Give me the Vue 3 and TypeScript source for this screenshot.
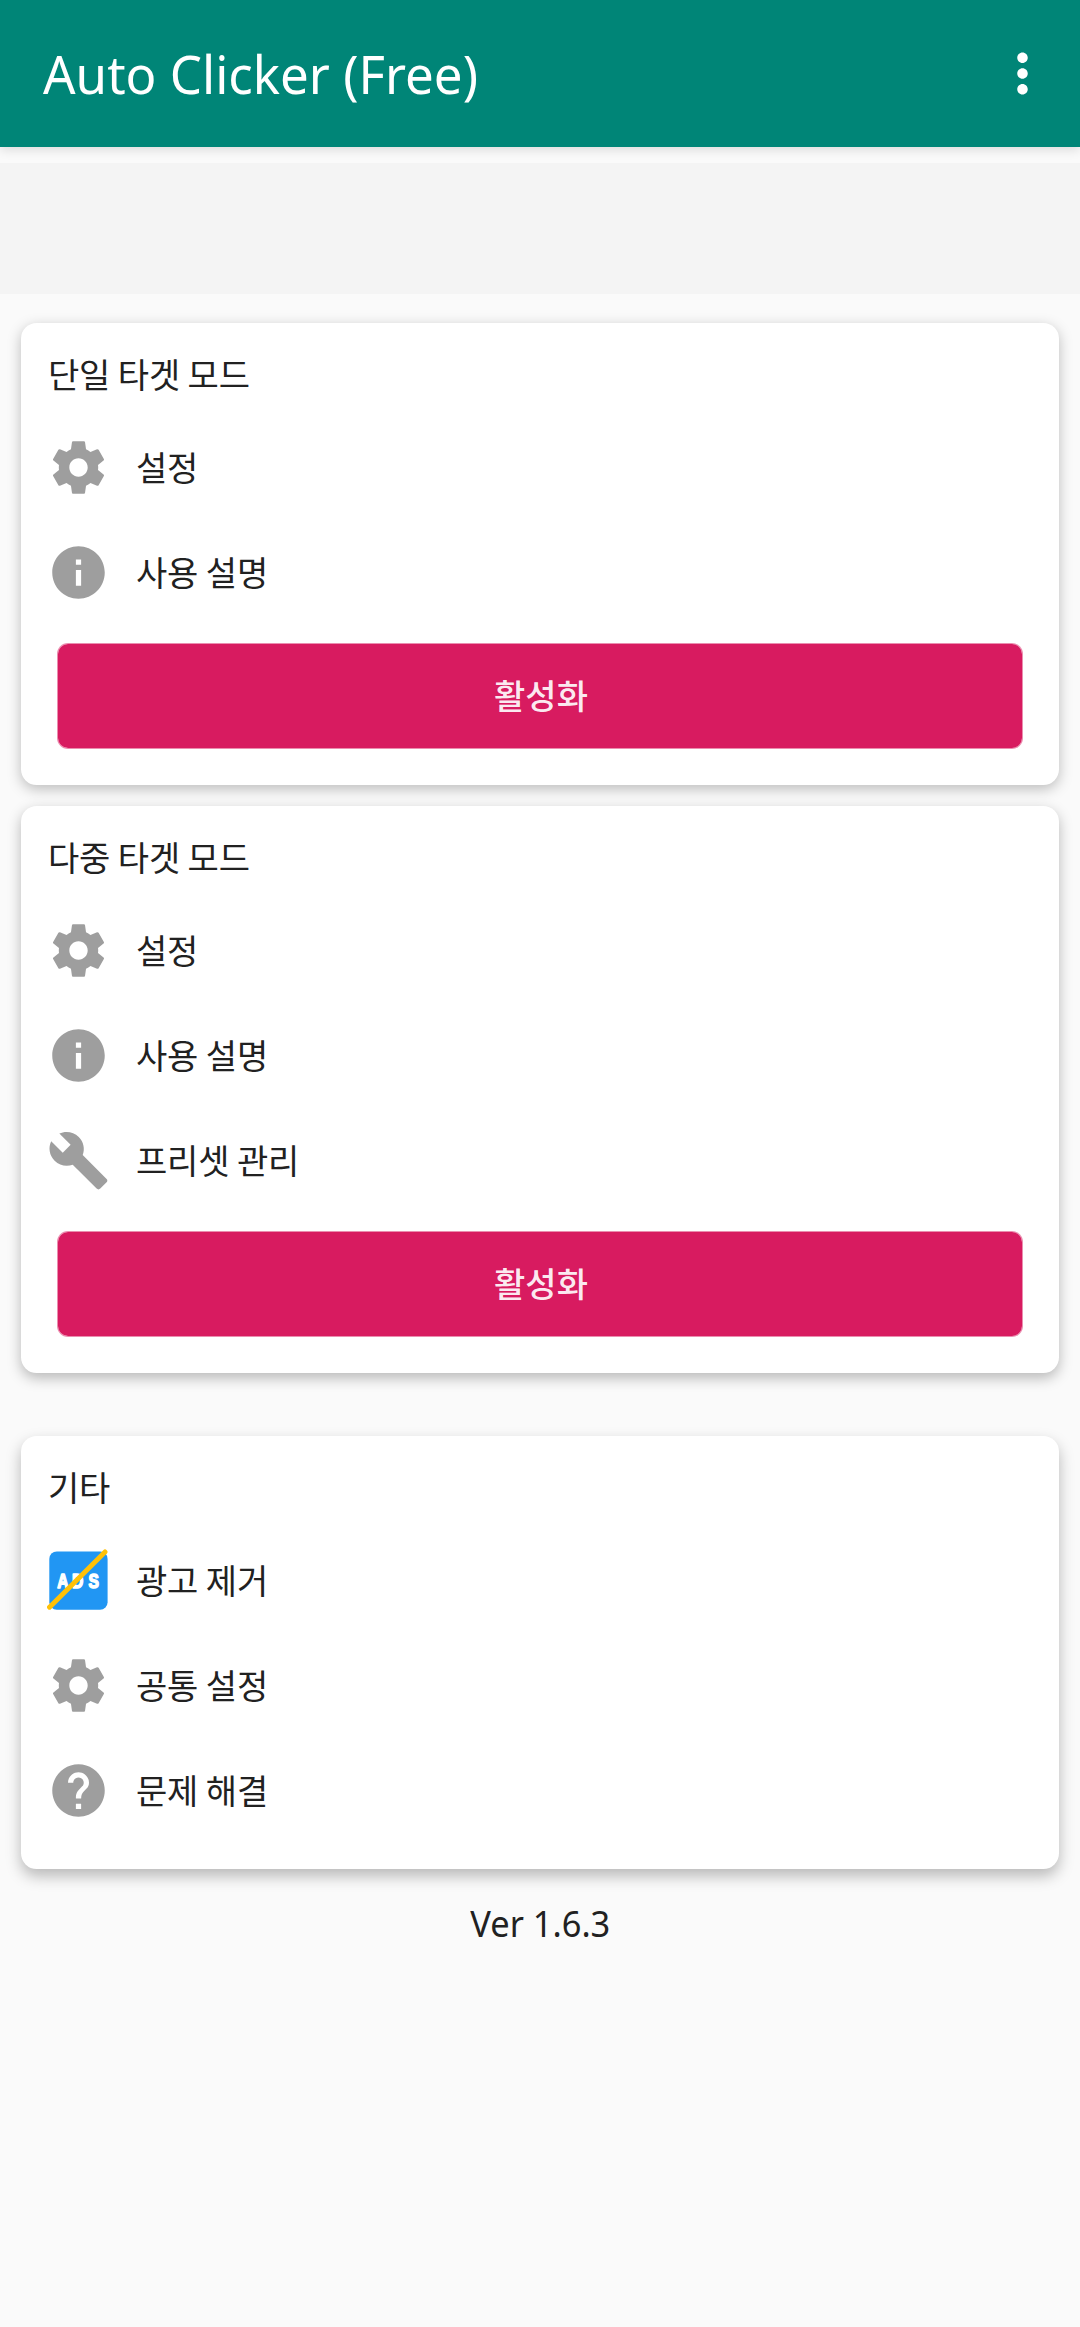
<script setup lang="ts">
type IconName = 'settings' | 'info' | 'build' | 'ads' | 'help'

interface MenuItem {
  icon: IconName
  label: string
}

interface Section {
  id: string
  title: string
  items: MenuItem[]
  action?: string
}

const paths: Record<Exclude<IconName, 'ads'>, string> = {
  settings:
    'M19.43 12.98c.04-.32.07-.64.07-.98s-.03-.66-.07-.98l2.11-1.65c.19-.15.24-.42.12-.64l-2-3.46c-.12-.22-.39-.3-.61-.22l-2.49 1c-.52-.4-1.08-.73-1.69-.98l-.38-2.65C14.46 2.18 14.25 2 14 2h-4c-.25 0-.46.18-.49.42l-.38 2.65c-.61.25-1.17.59-1.69.98l-2.49-1c-.23-.09-.49 0-.61.22l-2 3.46c-.13.22-.07.49.12.64l2.11 1.65c-.04.32-.07.65-.07.98s.03.66.07.98l-2.11 1.65c-.19.15-.24.42-.12.64l2 3.46c.12.22.39.3.61.22l2.49-1c.52.4 1.08.73 1.69.98l.38 2.65c.03.24.24.42.49.42h4c.25 0 .46-.18.49-.42l.38-2.65c.61-.25 1.17-.59 1.69-.98l2.49 1c.23.09.49 0 .61-.22l2-3.46c.12-.22.07-.49-.12-.64l-2.11-1.65zM12 15.5c-1.93 0-3.5-1.57-3.5-3.5s1.57-3.5 3.5-3.5 3.5 1.57 3.5 3.5-1.57 3.5-3.5 3.5z',
  info: 'M12 2C6.48 2 2 6.48 2 12s4.48 10 10 10 10-4.48 10-10S17.52 2 12 2zm1 15h-2v-6h2v6zm0-8h-2V7h2v2z',
  build:
    'M22.7 19l-9.1-9.1c.9-2.3.4-5-1.5-6.9-2-2-5-2.4-7.4-1.3L9 6 6 9 1.6 4.7C.4 7.1.9 10.1 2.9 12.1c1.9 1.9 4.6 2.4 6.9 1.5l9.1 9.1c.4.4 1 .4 1.4 0l2.3-2.3c.5-.4.5-1.1.1-1.4z',
  help: 'M12 2C6.48 2 2 6.48 2 12s4.48 10 10 10 10-4.48 10-10S17.52 2 12 2zm1 17h-2v-2h2v2zm2.07-7.75l-.9.92C13.45 12.9 13 13.5 13 15h-2v-.5c0-1.1.45-2.1 1.17-2.83l1.24-1.26c.37-.36.59-.86.59-1.41 0-1.1-.9-2-2-2s-2 .9-2 2H8c0-2.21 1.79-4 4-4s4 1.79 4 4c0 .88-.36 1.68-.93 2.25z',
}

const sections: Section[] = [
  {
    id: 'single',
    title: '단일 타겟 모드',
    items: [
      { icon: 'settings', label: '설정' },
      { icon: 'info', label: '사용 설명' },
    ],
    action: '활성화',
  },
  {
    id: 'multi',
    title: '다중 타겟 모드',
    items: [
      { icon: 'settings', label: '설정' },
      { icon: 'info', label: '사용 설명' },
      { icon: 'build', label: '프리셋 관리' },
    ],
    action: '활성화',
  },
  {
    id: 'etc',
    title: '기타',
    items: [
      { icon: 'ads', label: '광고 제거' },
      { icon: 'settings', label: '공통 설정' },
      { icon: 'help', label: '문제 해결' },
    ],
  },
]
</script>

<template>
  <div class="screen">
    <header class="app-bar">
      <h1 class="app-title">Auto Clicker (Free)</h1>
      <button class="overflow" aria-label="menu">
        <svg viewBox="0 0 24 24"><path d="M12 8c1.1 0 2-.9 2-2s-.9-2-2-2-2 .9-2 2 .9 2 2 2zm0 2c-1.1 0-2 .9-2 2s.9 2 2 2 2-.9 2-2-.9-2-2-2zm0 6c-1.1 0-2 .9-2 2s.9 2 2 2 2-.9 2-2-.9-2-2-2z" /></svg>
      </button>
    </header>
    <div class="banner"></div>
    <main class="content">
      <section v-for="s in sections" :key="s.id" class="card" :class="s.id">
        <h2 class="card-title">{{ s.title }}</h2>
        <ul class="menu">
          <li v-for="item in s.items" :key="item.label" class="row">
            <svg v-if="item.icon === 'ads'" class="icon" viewBox="0 0 63 63">
              <rect x="2.3" y="2.4" width="58.3" height="58.3" rx="7.5" fill="#2196f3" />
              <text class="ads" transform="scale(0.78 1)" x="13 32.2 53.2" y="38.7">ADS</text>
              <line x1="2.5" y1="58.2" x2="58" y2="2.9" stroke="#ffc107" stroke-width="4.9" stroke-linecap="round" />
            </svg>
            <svg v-else class="icon" viewBox="0 0 24 24"><path :d="paths[item.icon]" /></svg>
            <span class="label">{{ item.label }}</span>
          </li>
        </ul>
        <button v-if="s.action" class="action"><span>{{ s.action }}</span></button>
      </section>
      <p class="version"><span>Ver 1.6.3</span></p>
    </main>
  </div>
</template>

<style>
body {
  margin: 0;
  background: #fafafa;
}
</style>

<style scoped>
.screen {
  width: 1080px;
  height: 2327px;
  overflow: hidden;
  background: #fafafa;
  color: #212121;
  font-family: 'Noto Sans', 'Noto Sans CJK KR', sans-serif;
}

.app-bar {
  display: flex;
  align-items: center;
  justify-content: space-between;
  box-sizing: border-box;
  height: 147px;
  padding: 0 26px 0 43px;
  background: #008577;
  box-shadow: 0 3px 10px rgba(0, 0, 0, 0.12);
}

.app-title {
  margin: 0;
  padding-top: 1px;
  color: #fff;
  font-size: 53px;
  font-weight: 400;
  line-height: 72px;
  transform: scaleX(0.963);
  transform-origin: left;
}

.overflow {
  display: flex;
  width: 63px;
  height: 63px;
  padding: 0;
  border: 0;
  background: none;
}

.overflow svg {
  width: 63px;
  height: 63px;
  fill: #fff;
}

.banner {
  height: 131px;
  margin-top: 16px;
  background: #f4f4f4;
}

.content {
  display: flex;
  flex-direction: column;
  padding: 29px 21px 0;
}

.card {
  display: flex;
  flex-direction: column;
  box-sizing: border-box;
  padding: 26px;
  border-radius: 15.75px;
  background: #fff;
}

.single {
  height: 462px;
  margin-bottom: 21px;
  box-shadow: 0 4px 14px rgba(0, 0, 0, 0.25);
}

.multi {
  height: 567px;
  margin-bottom: 63px;
  box-shadow: 0 5px 14px rgba(0, 0, 0, 0.27);
}

.etc {
  height: 433px;
  box-shadow: 0 7px 15px rgba(0, 0, 0, 0.27);
}

.card-title {
  height: 52px;
  margin: 0 0 14px;
  padding-left: 1px;
  font-size: 34px;
  font-weight: 400;
  line-height: 52px;
  letter-spacing: -0.2px;
  word-spacing: -1px;
}

.menu {
  margin: 0;
  padding: 0;
  list-style: none;
}

.row {
  display: flex;
  align-items: center;
  height: 105px;
  gap: 26px;
}

.icon {
  width: 63px;
  height: 63px;
  flex: none;
  fill: #9e9e9e;
}

.ads {
  fill: #fff;
  stroke: #fff;
  stroke-width: 1.6px;
  stroke-linejoin: round;
  font-family: 'Liberation Sans', sans-serif;
  font-size: 20px;
  font-weight: 700;
}

.label {
  font-size: 34px;
  line-height: 50px;
  letter-spacing: -0.2px;
  word-spacing: -1px;
}

.action {
  display: flex;
  align-items: center;
  justify-content: center;
  box-sizing: border-box;
  height: 106px;
  margin: 18px 10px 0;
  padding: 0 0 0 2px;
  border: 1px solid rgba(216, 27, 96, 0.5);
  border-radius: 11px;
  background: #d81b60;
  background-clip: padding-box;
  color: rgba(255, 255, 255, 0.93);
  font-family: inherit;
  font-size: 34px;
  font-weight: 500;
  line-height: 50px;
}

.version {
  margin: 28px 0 0;
  text-align: center;
  font-size: 37px;
  line-height: 52px;
}

.version span {
  display: inline-block;
  transform: scaleX(0.93);
}
</style>
